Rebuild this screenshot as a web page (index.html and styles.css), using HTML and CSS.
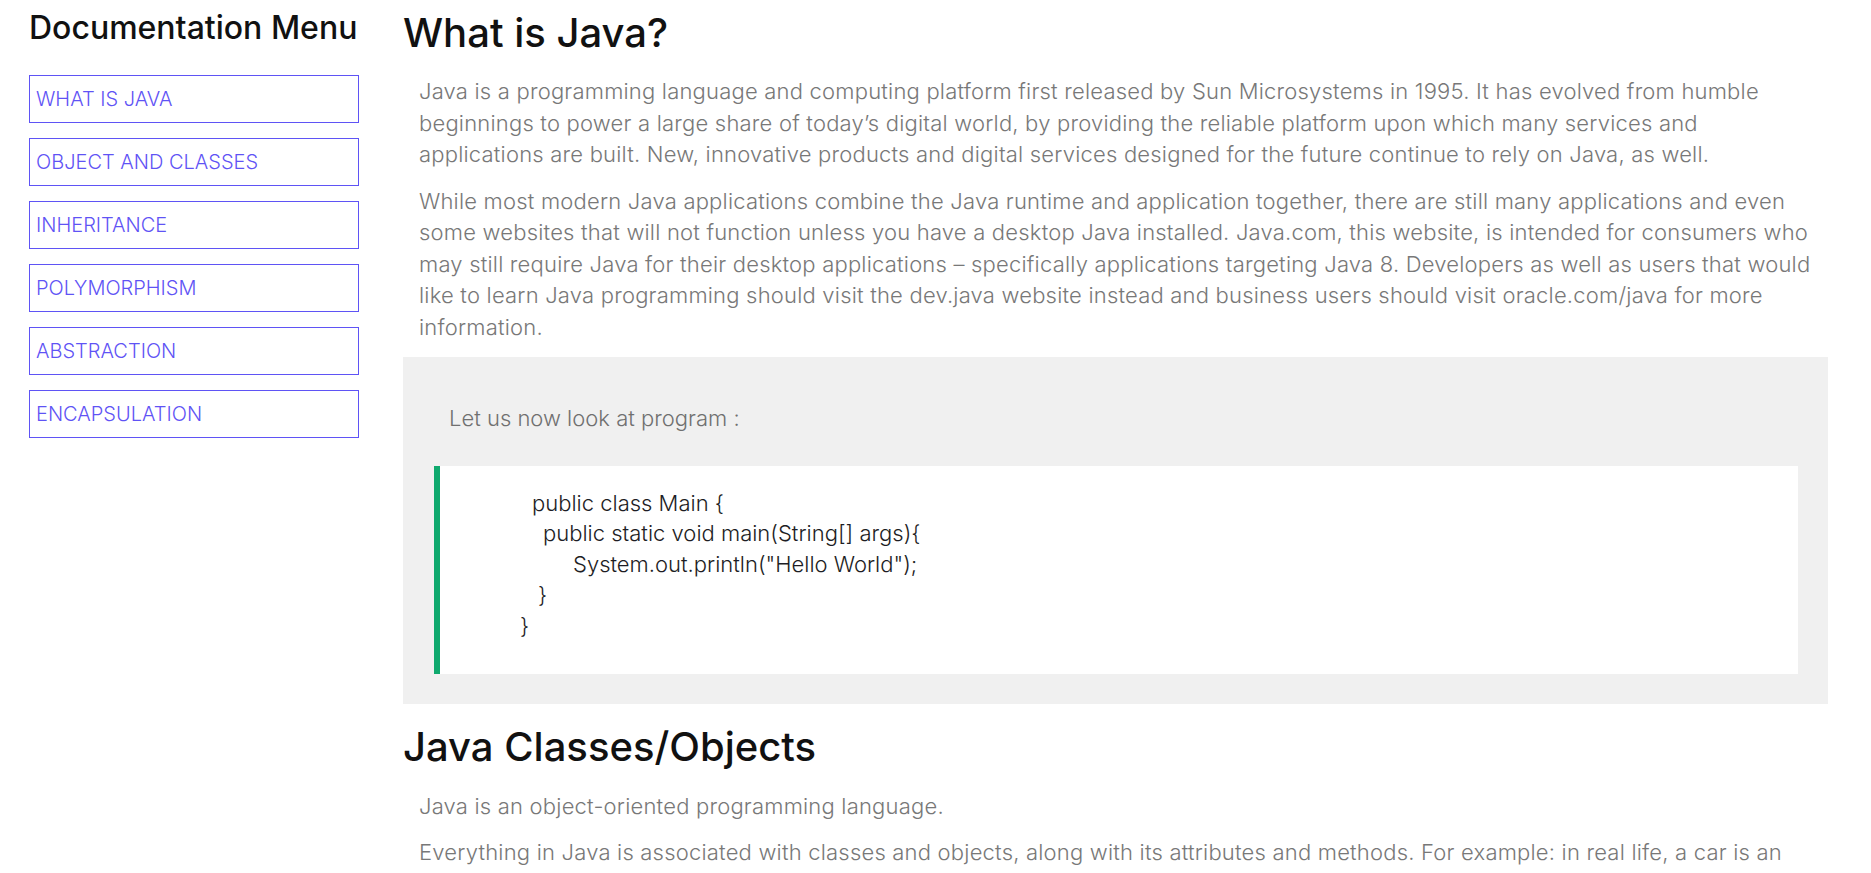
FILE: index.html
```html
<!DOCTYPE html>
<html lang="en">
<head>
<meta charset="utf-8">
<title>Java Documentation</title>
<link rel="stylesheet" href="styles.css">
</head>
<body>
<div class="page">
  <nav class="sidebar">
    <h2 class="menu-title">Documentation Menu</h2>
    <ul class="menu">
      <li><a href="#what">WHAT IS JAVA</a></li>
      <li><a href="#classes">OBJECT AND CLASSES</a></li>
      <li><a href="#inheritance">INHERITANCE</a></li>
      <li><a href="#poly">POLYMORPHISM</a></li>
      <li><a href="#abstraction">ABSTRACTION</a></li>
      <li><a href="#encap">ENCAPSULATION</a></li>
    </ul>
  </nav>
  <main class="content">
    <section id="what" class="section">
      <h1 class="section-title">What is Java?</h1>
      <p class="text">Java is a programming language and computing platform first released by Sun Microsystems in 1995. It has evolved from humble<br>beginnings to power a large share of today’s digital world, by providing the reliable platform upon which many services and<br>applications are built. New, innovative products and digital services designed for the future continue to rely on Java, as well.</p>
      <p class="text">While most modern Java applications combine the Java runtime and application together, there are still many applications and even<br>some websites that will not function unless you have a desktop Java installed. Java.com, this website, is intended for consumers who<br>may still require Java for their desktop applications – specifically applications targeting Java 8. Developers as well as users that would<br>like to learn Java programming should visit the dev.java website instead and business users should visit oracle.com/java for more<br>information.</p>
      <div class="example">
        <p class="example-intro">Let us now look at program :</p>
        <div class="code">
          <div class="ln i1">public class Main {</div>
          <div class="ln i2">public static void main(String[] args){</div>
          <div class="ln i3">System.out.println("Hello World");</div>
          <div class="ln i4">}</div>
          <div class="ln i5">}</div>
        </div>
      </div>
    </section>
    <section id="classes" class="section">
      <h1 class="section-title">Java Classes/Objects</h1>
      <p class="text">Java is an object-oriented programming language.</p>
      <p class="text">Everything in Java is associated with classes and objects, along with its attributes and methods. For example: in real life, a car is an<br>object. The car has attributes, such as weight and color, and methods, such as drive and brake.</p>
    </section>
  </main>
</div>
</body>
</html>
```
FILE: styles.css
```css
* { box-sizing: border-box; }
html, body { margin: 0; padding: 0; }
body {
  font-family: "Inter", "Liberation Sans", sans-serif;
  background: #ffffff;
  color: #111111;
  overflow: hidden;
  height: 873px;
}
.page {
  display: flex;
  align-items: flex-start;
}
.sidebar {
  width: 403px;
  flex: none;
  padding-left: 29px;
  padding-top: 8px;
}
.menu-title {
  margin: 0;
  font-size: 32px;
  font-weight: 500;
  line-height: 40px;
  color: #111;
}
.menu {
  list-style: none;
  margin: 27px 0 0 0;
  padding: 0;
  width: 330px;
  display: flex;
  flex-direction: column;
  gap: 15px;
}
.menu a {
  display: flex;
  align-items: center;
  height: 48px;
  padding-left: 6px;
  border: 1px solid #5f53f5;
  color: #5f53f5;
  text-decoration: none;
  font-size: 20px;
  font-weight: 300;
}
.content {
  width: 1425px;
  flex: none;
}
.section-title {
  margin: 0;
  font-size: 40px;
  font-weight: 500;
  line-height: 48px;
  color: #111;
}
#what .section-title { margin-top: 9px; }
.text {
  margin: 15px 0 0 0;
  padding: 0 16px;
  font-size: 22px;
  font-weight: 300;
  line-height: 31.5px;
  letter-spacing: 0.2px;
  color: #787878;
  white-space: nowrap;
}
.section-title + .text { margin-top: 19px; }
.example {
  margin-top: 14px;
  background: #f0f0f0;
  padding: 46px 30px 30px 31px;
}
.example-intro {
  margin: 0 0 31px 0;
  padding-left: 15px;
  font-size: 22px;
  font-weight: 300;
  line-height: 31.5px;
  color: #707070;
}
.code {
  background: #ffffff;
  border-left: 6px solid #0fa96e;
  padding: 22px 0 0 0;
  height: 208px;
}
.ln {
  font-size: 22px;
  font-weight: 300;
  line-height: 30.75px;
  color: #1d1d24;
  white-space: pre;
}
.i1 { padding-left: 92px; }
.i2 { padding-left: 103px; }
.i3 { padding-left: 133px; }
.i4 { padding-left: 98px; }
.i5 { padding-left: 80px; }
#classes .section-title { margin-top: 19px; }
#classes .section-title + .text { margin-top: 20px; }
```
